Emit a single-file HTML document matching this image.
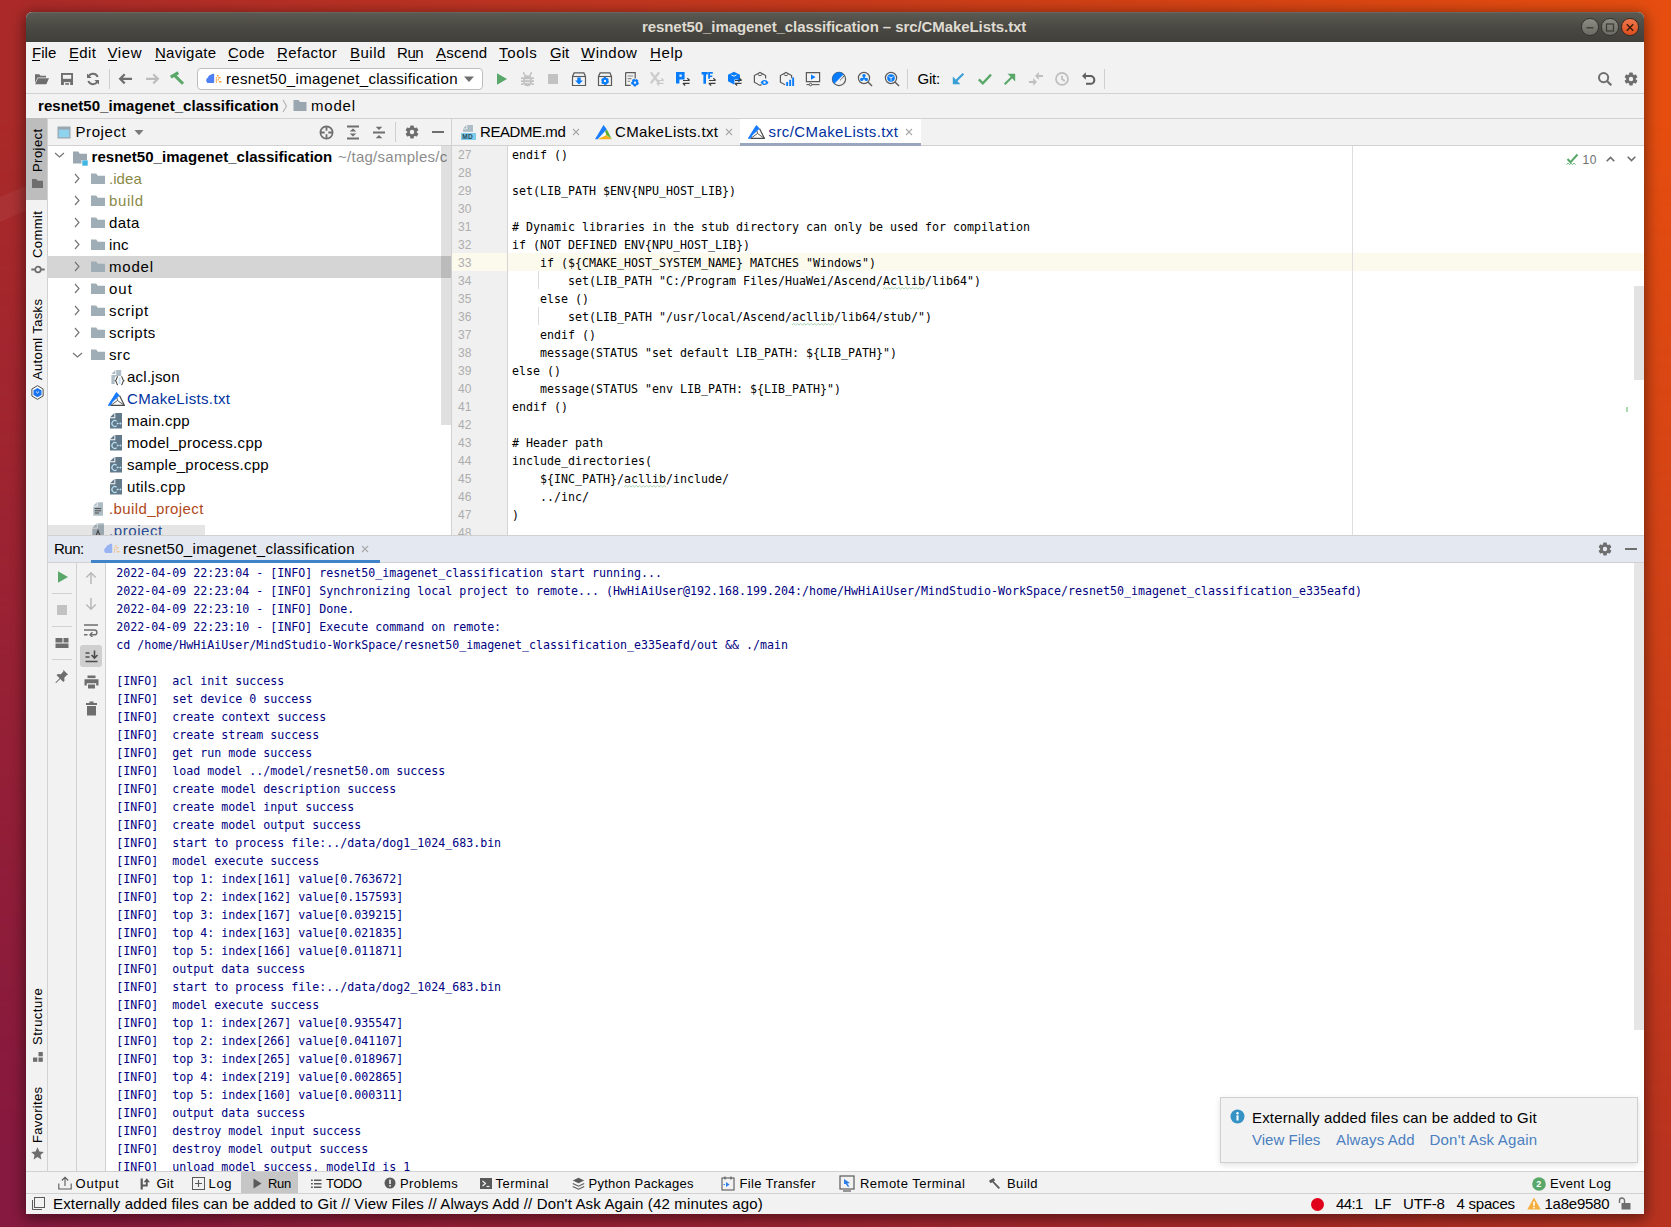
<!DOCTYPE html>
<html lang="en"><head><meta charset="utf-8"><title>resnet50_imagenet_classification – src/CMakeLists.txt</title>
<style>
html,body{margin:0;padding:0}
body{width:1671px;height:1227px;overflow:hidden;position:relative;font-family:"Liberation Sans", sans-serif;
background:#b8302a}
#root div,#root span,#root svg{position:absolute;box-sizing:border-box}
#root{position:absolute;left:0;top:0;width:1671px;height:1227px;overflow:hidden}
.t{font-family:"Liberation Sans", sans-serif;white-space:pre;line-height:20px;height:20px}
.m{font-family:"DejaVu Sans Mono", "Liberation Mono", monospace;white-space:pre;line-height:20px;height:20px;font-size:11.63px}
</style></head>
<body><div id="root">
<div style="left:0px;top:0px;width:1671px;height:1227px;background:linear-gradient(90deg,#aa2a29 0%,#b32e27 12%,#c2371f 40%,#d04016 65%,#df4911 88%,#e64e10 100%)"></div>
<div style="left:0px;top:0px;width:1671px;height:1227px;background:linear-gradient(90deg,#86193f 0%,#8f1c3a 15%,#9c2232 45%,#a92a27 75%,#b8331f 100%);-webkit-mask-image:linear-gradient(180deg,transparent 0%,transparent 10%,#000 94%);mask-image:linear-gradient(180deg,transparent 0%,transparent 10%,#000 94%)"></div>
<svg style="left:0px;top:150px;" width="40" height="100" viewBox="0 0 40 100"><path d="M0 47L40 30v24L0 72z" fill="rgba(255,255,255,.05)"/></svg>
<div style="left:26px;top:12px;width:1618px;height:1202px;background:#f2f2f2;border-radius:6px 6px 0 0;box-shadow:0 3px 14px 2px rgba(0,0,0,.45)"></div>
<div style="left:26px;top:12px;width:1618px;height:30px;background:linear-gradient(180deg,#5c5a53 0%,#4a4943 50%,#403f3a 100%);border-radius:6px 6px 0 0;box-shadow:inset 0 1px 0 rgba(255,255,255,.08)"></div>
<span class="t" style="left:642px;top:16.80px;font-size:15px;color:#dfdbd2;font-weight:bold;letter-spacing:-0.080px;">resnet50_imagenet_classification – src/CMakeLists.txt</span>
<div style="left:1581.2px;top:18.2px;width:17.6px;height:17.6px;background:linear-gradient(180deg,#8c8b84,#6b6a63);border:1px solid #34332f;border-radius:50%"></div>
<div style="left:1601.2px;top:18.2px;width:17.6px;height:17.6px;background:linear-gradient(180deg,#8c8b84,#6b6a63);border:1px solid #34332f;border-radius:50%"></div>
<div style="left:1621.2px;top:18.2px;width:17.6px;height:17.6px;background:linear-gradient(180deg,#f0784c,#dd4e1e);border:1px solid #3a2a22;border-radius:50%"></div>
<svg style="left:1582px;top:18.6px;" width="56" height="17" viewBox="0 0 56 17"><path d="M4.5 8.8h7" stroke="#3b3a35" stroke-width="1.3" fill="none"/><rect x="24.5" y="5" width="7" height="7" stroke="#3b3a35" stroke-width="1.2" fill="none"/><path d="M44.8 5.3l6.4 6.4M51.2 5.3l-6.4 6.4" stroke="#3a1a0c" stroke-width="1.4" fill="none"/></svg>
<span class="t" style="left:32px;top:42.80px;font-size:15px;letter-spacing:0.032px;">File</span>
<span class="t" style="left:69px;top:42.80px;font-size:15px;letter-spacing:0.360px;">Edit</span>
<span class="t" style="left:107.5px;top:42.80px;font-size:15px;letter-spacing:0.637px;">View</span>
<span class="t" style="left:155px;top:42.80px;font-size:15px;letter-spacing:0.260px;">Navigate</span>
<span class="t" style="left:228px;top:42.80px;font-size:15px;letter-spacing:0.235px;">Code</span>
<span class="t" style="left:277px;top:42.80px;font-size:15px;letter-spacing:0.450px;">Refactor</span>
<span class="t" style="left:350px;top:42.80px;font-size:15px;letter-spacing:0.488px;">Build</span>
<span class="t" style="left:397px;top:42.80px;font-size:15px;letter-spacing:-0.406px;">Run</span>
<span class="t" style="left:436px;top:42.80px;font-size:15px;letter-spacing:0.210px;">Ascend</span>
<span class="t" style="left:499px;top:42.80px;font-size:15px;letter-spacing:0.654px;">Tools</span>
<span class="t" style="left:550px;top:42.80px;font-size:15px;letter-spacing:0.042px;">Git</span>
<span class="t" style="left:581px;top:42.80px;font-size:15px;letter-spacing:0.491px;">Window</span>
<span class="t" style="left:650px;top:42.80px;font-size:15px;letter-spacing:0.610px;">Help</span>
<div style="left:32px;top:59.5px;width:8px;height:1px;background:#000"></div>
<div style="left:69px;top:59.5px;width:9px;height:1px;background:#000"></div>
<div style="left:107.5px;top:59.5px;width:9px;height:1px;background:#000"></div>
<div style="left:155px;top:59.5px;width:11px;height:1px;background:#000"></div>
<div style="left:228px;top:59.5px;width:10px;height:1px;background:#000"></div>
<div style="left:277px;top:59.5px;width:10px;height:1px;background:#000"></div>
<div style="left:350px;top:59.5px;width:10px;height:1px;background:#000"></div>
<div style="left:409px;top:59.5px;width:8px;height:1px;background:#000"></div>
<div style="left:436px;top:59.5px;width:10px;height:1px;background:#000"></div>
<div style="left:499px;top:59.5px;width:9px;height:1px;background:#000"></div>
<div style="left:550px;top:59.5px;width:10px;height:1px;background:#000"></div>
<div style="left:581px;top:59.5px;width:13px;height:1px;background:#000"></div>
<div style="left:650px;top:59.5px;width:11px;height:1px;background:#000"></div>
<div style="left:26px;top:93px;width:1618px;height:1px;background:#d1d1d1"></div>
<div style="left:197px;top:68px;width:286px;height:22px;background:#fff;border:1px solid #bebebe;border-radius:4px"></div>
<span class="t" style="left:226px;top:68.80px;font-size:15px;letter-spacing:0.312px;">resnet50_imagenet_classification</span>
<svg style="left:463px;top:75px;" width="12" height="8" viewBox="0 0 12 8"><path d="M1 1.5h10L6 7z" fill="#6e6e6e"/></svg>
<svg style="left:34px;top:72px;" width="16" height="14" viewBox="0 0 16 14"><path d="M1 2.2h4.2l1.4 1.6H12v1.6H3.6L1 11z" fill="#6e6e6e"/><path d="M3.9 6.2H15l-2.7 6H1.2z" fill="#6e6e6e"/></svg>
<svg style="left:60px;top:72px;" width="14" height="14" viewBox="0 0 14 14"><path d="M1 1h12v12H1z" fill="#6e6e6e"/><path d="M2.900 2.900h8.300v3.900H2.900z" fill="#f2f2f2"/><path d="M3.900 10.100h6.300V13H3.900z" fill="#f2f2f2"/><path d="M5.200 11.100H9v1.600H5.200z" fill="#6e6e6e"/></svg>
<svg style="left:86px;top:72px;" width="14" height="14" viewBox="0 0 14 14"><path d="M11.7 5A5 5 0 0 0 2.6 4.6M2.300 9a5 5 0 0 0 9.100.400" stroke="#6e6e6e" stroke-width="2" fill="none"/><path d="M1 1.500v4.600h4.600zM13 12.500V7.900H8.400z" fill="#6e6e6e"/></svg>
<div style="left:109px;top:69px;width:1px;height:20px;background:#cfcfcf"></div>
<svg style="left:118px;top:72px;" width="15" height="14" viewBox="0 0 15 14"><path d="M14 6.850H2.400M6.700 2.300L2.100 6.850l4.600 4.550" stroke="#6e6e6e" stroke-width="2.200" fill="none"/></svg>
<svg style="left:145px;top:72px;" width="15" height="14" viewBox="0 0 15 14"><path d="M1 6.850h11.600M8.300 2.300l4.600 4.550-4.600 4.550" stroke="#bdbdbd" stroke-width="2.200" fill="none"/></svg>
<svg style="left:169px;top:71px;" width="17" height="16" viewBox="0 0 17 16"><path d="M1.800 6.200L9.300 1.700" stroke="#59a869" stroke-width="3.300" fill="none"/><path d="M5.800 4.600l8.200 8.200" stroke="#59a869" stroke-width="3" fill="none"/></svg>
<svg style="left:205px;top:72px;" width="18" height="14" viewBox="0 0 18 14"><path d="M1.400 9.500c-.6-2 .3-3.600 1.700-4.100C3.400 3.600 4.800 2.600 6 2.700 6.800 1.800 8 1.400 9.200 2v8.200c0 .5-.3.800-.8.800H3.200c-.9 0-1.500-.6-1.800-1.500z" fill="#4f7ff5"/><path d="M12 3.800h1.600M10.800 5.900h1.300M13.300 5.800h2.200M10.800 8h1.300M12.800 7.900h1.200M10.800 10h1.300M14 9.800h2.500" stroke="#f7a035" stroke-width="1.400" fill="none"/></svg>
<svg style="left:496px;top:72px;" width="12" height="14" viewBox="0 0 12 14"><path d="M1 1.2L11 7 1 12.8z" fill="#59a869"/></svg>
<svg style="left:520px;top:70.5px;" width="15" height="16" viewBox="0 0 15 16"><g fill="#c2c2c2"><rect x="3" y="4.300" width="9" height="11" rx="4.200"/><path d="M1 7.200h2.500M11.500 7.200h2.500M1 10.200h2.500M11.500 10.200h2.500M1 13.200h2.500M11.500 13.200h2.500" stroke="#c2c2c2" stroke-width="1.700"/><path d="M5.200 4.800L3.300 1.200M9.800 4.800l1.900-3.600" stroke="#c2c2c2" stroke-width="1.500"/></g><path d="M5 8.700h5M5 11.700h5" stroke="#f2f2f2" stroke-width=".9"/></svg>
<div style="left:548px;top:74px;width:10px;height:10px;background:#c2c2c2"></div>
<svg style="left:571px;top:71px;" width="16" height="16" viewBox="0 0 16 16"><path d="M1.5 14.5v-9l1.6-3.6h9.8l1.6 3.6v9z" stroke="#5a5a5a" stroke-width="1.2" fill="none"/><path d="M1.5 5.5h13" stroke="#5a5a5a" stroke-width="1.1"/><path d="M6.3 6.6h3.4v2.9h2.2L8 13.5 4.100 9.500h2.200z" fill="#087cfa"/></svg>
<svg style="left:597px;top:71px;" width="16" height="16" viewBox="0 0 16 16"><path d="M1.5 14.5v-9l1.6-3.6h9.8l1.6 3.6v9z" stroke="#5a5a5a" stroke-width="1.2" fill="none"/><path d="M1.5 5.5h13" stroke="#5a5a5a" stroke-width="1.1"/><circle cx="8" cy="10" r="2.6" fill="none" stroke="#087cfa" stroke-width="2.6" stroke-dasharray="1.9 .82"/><circle cx="8" cy="10" r="2.2" fill="none" stroke="#087cfa" stroke-width="2"/></svg>
<svg style="left:624px;top:71px;" width="16" height="16" viewBox="0 0 16 16"><path d="M1.6 1.6h9.6v6M1.6 1.6v12.8h5" stroke="#5a5a5a" stroke-width="1.2" fill="none"/><path d="M3.6 5h5.6M3.6 7.6h4M3.6 10.2h2.6" stroke="#8a8a8a" stroke-width="1.1"/><circle cx="11" cy="11.6" r="2.6" fill="none" stroke="#087cfa" stroke-width="2.6" stroke-dasharray="2 1.2"/><circle cx="11" cy="11.6" r="2.2" fill="none" stroke="#087cfa" stroke-width="1.8"/></svg>
<svg style="left:649px;top:71px;" width="16" height="16" viewBox="0 0 16 16"><path d="M1.8 1.2l8.400 11M10.200 1.200l-8.400 11" stroke="#cdcdcd" stroke-width="2.300" fill="none"/><path d="M8 9.5h6.5M12.3 7.3l2.4 2.2M14.5 12.3H8M10.2 14.5l-2.4-2.2" stroke="#c9c9c9" stroke-width="1.2" fill="none"/></svg>
<svg style="left:675px;top:71px;" width="16" height="16" viewBox="0 0 16 16"><path d="M1 1h8.6v7.4H4.4v4.2H1z" fill="#087cfa"/><path d="M4.4 3.6h2.4v2.2H4.4z" fill="#f2f2f2"/><path d="M8 9.5h6.5M12.3 7.3l2.4 2.2M14.5 12.3H8M10.2 14.5l-2.4-2.2" stroke="#3c3c3c" stroke-width="1.2" fill="none"/></svg>
<svg style="left:701px;top:71px;" width="16" height="16" viewBox="0 0 16 16"><path d="M.6 1h6.2v2.4H5v9.4H2.4V3.4H.6z" fill="#087cfa"/><path d="M7.2 1h4.6v1.8H9v1.6h2.3v1.6H9v1.8H7.2z" fill="#087cfa"/><path d="M8 9.5h6.5M12.3 7.3l2.4 2.2M14.5 12.3H8M10.2 14.5l-2.4-2.2" stroke="#3c3c3c" stroke-width="1.2" fill="none"/></svg>
<svg style="left:727px;top:71px;" width="16" height="16" viewBox="0 0 16 16"><path d="M7 .8l6 3v6.5l-2 1V8.6H7.4v4.6L7 13.4 1 10.3V3.8z" fill="#087cfa"/><path d="M4.5 4l2.5 1.2L9.5 4" stroke="#f2f2f2" stroke-width="1" fill="none"/><path d="M8 9.5h6.5M12.3 7.3l2.4 2.2M14.5 12.3H8M10.2 14.5l-2.4-2.2" stroke="#3c3c3c" stroke-width="1.2" fill="none"/></svg>
<svg style="left:753px;top:71px;" width="16" height="16" viewBox="0 0 16 16"><path d="M8.5 13.6L7 14.4 1.4 11.2V4.6L7 1.4l5.6 3.2v3" stroke="#5a5a5a" stroke-width="1.2" fill="none"/><path d="M4.8 3.6L7 4.8l2.2-1.2" stroke="#5a5a5a" stroke-width="1" fill="none"/><path d="M7.6 11.6c1.2-1.9 2.4-2.6 3.9-2.6s2.8.7 4 2.6c-1.2 1.8-2.5 2.5-4 2.5s-2.7-.7-3.9-2.5z" fill="#087cfa"/><circle cx="11.5" cy="11.5" r="1.2" fill="#f2f2f2"/></svg>
<svg style="left:779px;top:71px;" width="16" height="16" viewBox="0 0 16 16"><path d="M6 13.8L1.4 11.2V4.6L7 1.4l5.6 3.2v2.6" stroke="#5a5a5a" stroke-width="1.2" fill="none"/><path d="M4.8 3.6L7 4.8l2.2-1.2" stroke="#5a5a5a" stroke-width="1" fill="none"/><path d="M7.2 11h1.9v4H7.2zM10.2 8.8h1.9V15h-1.9zM13.2 6.6h1.9V15h-1.9z" fill="#087cfa"/></svg>
<svg style="left:805px;top:71px;" width="16" height="16" viewBox="0 0 16 16"><path d="M1.4 1.6h13.2v9H1.4z" stroke="#5a5a5a" stroke-width="1.2" fill="none"/><path d="M6 3.4l4.6 2.7L6 8.8z" fill="#087cfa"/><path d="M1.5 13.6h13" stroke="#5a5a5a" stroke-width="1.1"/><circle cx="5.6" cy="13.6" r="1.3" fill="#f2f2f2" stroke="#5a5a5a" stroke-width="1"/></svg>
<svg style="left:831px;top:71px;" width="16" height="16" viewBox="0 0 16 16"><circle cx="8" cy="8" r="6.6" fill="none" stroke="#5a5a5a" stroke-width="1.2"/><path d="M8 8L12.7 3.3A6.6 6.6 0 0 0 1.4 8 6.6 6.6 0 0 0 3.3 12.7z" fill="#087cfa"/><path d="M8 8L12.7 3.3" stroke="#f2f2f2" stroke-width="0"/><path d="M9.2 9.2c1-.9 2.8-2.7 3.6-4.2" stroke="#5a5a5a" stroke-width="1" fill="none"/></svg>
<svg style="left:857px;top:71px;" width="16" height="16" viewBox="0 0 16 16"><circle cx="7" cy="7" r="5.6" fill="none" stroke="#5a5a5a" stroke-width="1.2"/><path d="M11 11l4 4" stroke="#5a5a5a" stroke-width="1.5"/><circle cx="7" cy="4.6" r="1.7" fill="#087cfa"/><circle cx="4.7" cy="8.4" r="1.7" fill="#087cfa"/><circle cx="9.3" cy="8.4" r="1.7" fill="#087cfa"/><circle cx="7" cy="7.2" r="1.2" fill="#087cfa"/></svg>
<svg style="left:884px;top:71px;" width="16" height="16" viewBox="0 0 16 16"><circle cx="7" cy="7" r="5.6" fill="none" stroke="#5a5a5a" stroke-width="1.2"/><path d="M11 11l4 4" stroke="#5a5a5a" stroke-width="1.5"/><circle cx="7" cy="7" r="3.8" fill="#087cfa"/><path d="M4.6 5.6l2.4 1.2 2.4-1.2M7 6.8v3" stroke="#f2f2f2" stroke-width=".9" fill="none"/></svg>
<div style="left:907px;top:69px;width:1px;height:20px;background:#cfcfcf"></div>
<span class="t" style="left:917.5px;top:68.80px;font-size:15px;letter-spacing:-0.261px;">Git:</span>
<svg style="left:951px;top:72px;" width="14" height="14" viewBox="0 0 14 14"><path d="M12.300 1.700L5 9" stroke="#389fd6" stroke-width="2.100" fill="none"/><path d="M1.800 12.200V4.600l7.600 7.600z" fill="#389fd6"/></svg>
<svg style="left:977px;top:72px;" width="16" height="14" viewBox="0 0 16 14"><path d="M1.800 7.400l4 3.900L14 2.600" stroke="#59a869" stroke-width="2.300" fill="none"/></svg>
<svg style="left:1003px;top:72px;" width="14" height="14" viewBox="0 0 14 14"><path d="M1.700 12.300L9 5" stroke="#59a869" stroke-width="2.100" fill="none"/><path d="M12.200 1.800v7.600L4.600 1.800z" fill="#59a869"/></svg>
<svg style="left:1029px;top:71px;" width="15" height="16" viewBox="0 0 15 16"><g fill="#bebebe"><path d="M6.100 4.900L9.800 1v7.800z"/><path d="M7.900 11L4.200 7v7.800z"/></g><path d="M9.600 4.900H14M0 11h4.400" stroke="#bebebe" stroke-width="2" fill="none"/></svg>
<svg style="left:1054px;top:71px;" width="16" height="16" viewBox="0 0 16 16"><circle cx="8" cy="7.900" r="6" fill="none" stroke="#bebebe" stroke-width="1.700"/><path d="M8 4.800V8l2.700 2" stroke="#bebebe" stroke-width="1.700" fill="none"/></svg>
<svg style="left:1082px;top:71px;" width="14" height="16" viewBox="0 0 14 16"><path d="M3.600 5H8.400a3.900 3.900 0 0 1 0 7.800H4" stroke="#5e5e5e" stroke-width="2.100" fill="none"/><path d="M0 5l3.900-3.800v7.600z" fill="#5e5e5e"/></svg>
<div style="left:1104px;top:69px;width:1px;height:20px;background:#cfcfcf"></div>
<svg style="left:1597px;top:71px;" width="16" height="16" viewBox="0 0 16 16"><circle cx="6.600" cy="6.600" r="4.600" fill="none" stroke="#6e6e6e" stroke-width="2"/><path d="M10 10l4.300 4.300" stroke="#6e6e6e" stroke-width="2.300"/></svg>
<svg style="left:1624px;top:72px;" width="14" height="14" viewBox="0 0 14 14"><g fill="#6e6e6e"><rect x="5.2" y="0.5" width="3.6" height="13" rx=".7" transform="rotate(0 7 7)"/><rect x="5.2" y="0.5" width="3.6" height="13" rx=".7" transform="rotate(60 7 7)"/><rect x="5.2" y="0.5" width="3.6" height="13" rx=".7" transform="rotate(120 7 7)"/><circle cx="7" cy="7" r="4.9"/></g><circle cx="7" cy="7" r="2.200" fill="#f2f2f2"/></svg>
<div style="left:26px;top:118px;width:1618px;height:1px;background:#d1d1d1"></div>
<span class="t" style="left:38px;top:95.80px;font-size:15px;font-weight:bold;letter-spacing:0.047px;">resnet50_imagenet_classification</span>
<svg style="left:282px;top:99px;" width="6" height="14" viewBox="0 0 6 14"><path d="M1 1l3.500 6L1 13" stroke="#b0b0b0" stroke-width="1.100" fill="none"/></svg>
<svg style="left:293px;top:99px;" width="14" height="13" viewBox="0 0 14 13"><path d="M0.500 1h5l1.500 2h6.500v9H0.500z" fill="#9aa7b0"/></svg>
<span class="t" style="left:311px;top:95.80px;font-size:15px;letter-spacing:0.788px;">model</span>
<div style="left:47px;top:119px;width:1px;height:1052px;background:#d1d1d1"></div>
<div style="left:26px;top:118px;width:21px;height:82px;background:#bdbdbd"></div>
<div style="left:38.4px;top:172.3px;width:0;height:0;transform:rotate(-90deg)"><span class="t" style="left:0;top:-10px;font-size:13px;color:#000;letter-spacing:0.447px;">Project</span></div>
<svg style="left:32px;top:179px;" width="11" height="9" viewBox="0 0 11 9"><path d="M0 0h4.300l1.300 1.800H11V9H0z" fill="#6e6e6e"/></svg>
<div style="left:38.4px;top:258.3px;width:0;height:0;transform:rotate(-90deg)"><span class="t" style="left:0;top:-10px;font-size:13px;color:#000;letter-spacing:0.421px;">Commit</span></div>
<svg style="left:30.5px;top:264.5px;" width="14" height="9" viewBox="0 0 14 9"><circle cx="7" cy="4.500" r="2.800" fill="none" stroke="#6e6e6e" stroke-width="1.800"/><path d="M0.300 4.500h3.500M10.200 4.500h3.500" stroke="#6e6e6e" stroke-width="1.800"/></svg>
<div style="left:38.4px;top:380px;width:0;height:0;transform:rotate(-90deg)"><span class="t" style="left:0;top:-10px;font-size:13px;color:#000;letter-spacing:0.352px;">Automl Tasks</span></div>
<svg style="left:30.5px;top:384.5px;" width="13" height="15" viewBox="0 0 13 15"><path d="M6.500 0.700l5.600 3.300v7L6.500 14.300 0.900 11V4z" fill="#fff" stroke="#3a3a3a" stroke-width=".9"/><path d="M6.500 3l4 2.300v4.600L6.500 12.200l-4-2.300V5.300z" fill="#1a73f0"/><path d="M5 6.600l1.500 1.300L8 6.600" stroke="#fff" stroke-width=".9" fill="none"/></svg>
<div style="left:38.4px;top:1045.3px;width:0;height:0;transform:rotate(-90deg)"><span class="t" style="left:0;top:-10px;font-size:13px;color:#000;letter-spacing:0.506px;">Structure</span></div>
<svg style="left:33px;top:1051.5px;" width="10" height="10" viewBox="0 0 10 10"><g fill="#6e6e6e"><rect x="5.500" y="0" width="4.300" height="4.300"/><rect x="0" y="5.500" width="4.300" height="4.300"/><rect x="5.500" y="5.500" width="4.300" height="4.300"/></g></svg>
<div style="left:38.4px;top:1142.6px;width:0;height:0;transform:rotate(-90deg)"><span class="t" style="left:0;top:-10px;font-size:13px;color:#000;letter-spacing:0.315px;">Favorites</span></div>
<svg style="left:31px;top:1147px;" width="13" height="13" viewBox="0 0 13 13"><path d="M6.500 0.300l1.900 4.200 4.400.500-3.300 3 .900 4.400-3.900-2.300-3.900 2.300.900-4.400-3.300-3 4.400-.500z" fill="#6e6e6e"/></svg>
<div style="left:48px;top:145px;width:403px;height:1px;background:#d1d1d1"></div>
<div style="left:451px;top:119px;width:1px;height:416px;background:#d1d1d1"></div>
<svg style="left:57px;top:126px;" width="14" height="13" viewBox="0 0 14 13"><rect x="0.500" y="0.500" width="13" height="12" fill="#9aa7b0"/><rect x="1.800" y="3.600" width="10.400" height="7.600" fill="#8fd3ee"/></svg>
<span class="t" style="left:75.5px;top:121.80px;font-size:15px;letter-spacing:0.587px;">Project</span>
<svg style="left:134px;top:129px;" width="10" height="7" viewBox="0 0 10 7"><path d="M0.500 1h9L5 6.300z" fill="#7a7a7a"/></svg>
<svg style="left:319px;top:124.8px;" width="15" height="15" viewBox="0 0 15 15"><circle cx="7.500" cy="7.500" r="6.100" fill="none" stroke="#6e6e6e" stroke-width="1.700"/><path d="M7.500 1.500v4.200M7.500 9.300v4.200M1.500 7.500h4.200M9.300 7.500h4.200" stroke="#6e6e6e" stroke-width="1.800"/></svg>
<svg style="left:346px;top:124.5px;" width="14" height="15" viewBox="0 0 14 15"><path d="M1 1.600h12M1 13.400h12" stroke="#6e6e6e" stroke-width="2"/><path d="M7 3.600l3.300 2.900H3.700zM7 11.400l3.300-2.900H3.700z" fill="#6e6e6e"/></svg>
<svg style="left:372px;top:124.5px;" width="14" height="15" viewBox="0 0 14 15"><path d="M1 7.500h12" stroke="#6e6e6e" stroke-width="2"/><path d="M7 5l3.300-3.200H3.700zM7 10l3.300 3.200H3.700z" fill="#6e6e6e"/></svg>
<div style="left:395px;top:122px;width:1px;height:20px;background:#cfcfcf"></div>
<svg style="left:405px;top:124.8px;" width="14" height="14" viewBox="0 0 14 14"><g fill="#6e6e6e"><rect x="5.2" y="0.5" width="3.6" height="13" rx=".7" transform="rotate(0 7 7)"/><rect x="5.2" y="0.5" width="3.6" height="13" rx=".7" transform="rotate(60 7 7)"/><rect x="5.2" y="0.5" width="3.6" height="13" rx=".7" transform="rotate(120 7 7)"/><circle cx="7" cy="7" r="4.9"/></g><circle cx="7" cy="7" r="2.200" fill="#f2f2f2"/></svg>
<div style="left:432px;top:130.8px;width:12px;height:2px;background:#6e6e6e"></div>
<div style="left:48px;top:146px;width:403px;height:389px;background:#fff"></div>
<div style="left:48px;top:256px;width:403px;height:22px;background:#d5d5d5"></div>
<svg style="left:54px;top:152px;" width="11" height="7" viewBox="0 0 11 7"><path d="M1 1l4.500 4L10 1" stroke="#737373" stroke-width="1.150" fill="none"/></svg>
<svg style="left:73px;top:151px;" width="16" height="15" viewBox="0 0 16 15"><path d="M0 0.500h5.200l1.600 2.200H14V9H8.500v3.500H0z" fill="#9aa7b0"/><rect x="9.300" y="9.300" width="5.400" height="5.400" fill="#40b6e0"/></svg>
<span class="t" style="left:91.5px;top:146.80px;font-size:15px;font-weight:bold;letter-spacing:0.047px;">resnet50_imagenet_classification</span>
<span class="t" style="left:338px;top:146.80px;font-size:15px;color:#8c8c8c;letter-spacing:0.267px;width:113px;overflow:hidden;">~/tag/samples/c</span>
<svg style="left:74px;top:173px;" width="7" height="11" viewBox="0 0 7 11"><path d="M1 1l4 4.500L1 10" stroke="#737373" stroke-width="1.150" fill="none"/></svg>
<svg style="left:91px;top:173px;" width="14" height="13" viewBox="0 0 14 13"><path d="M0 0.500h5.200l1.600 2.200H14V11H0z" fill="#9fadb6"/></svg>
<span class="t" style="left:109px;top:168.80px;font-size:15px;color:#8a8a47;letter-spacing:0.054px;">.idea</span>
<svg style="left:74px;top:195px;" width="7" height="11" viewBox="0 0 7 11"><path d="M1 1l4 4.500L1 10" stroke="#737373" stroke-width="1.150" fill="none"/></svg>
<svg style="left:91px;top:195px;" width="14" height="13" viewBox="0 0 14 13"><path d="M0 0.500h5.200l1.600 2.200H14V11H0z" fill="#9fadb6"/></svg>
<span class="t" style="left:109px;top:190.80px;font-size:15px;color:#8a8a47;letter-spacing:0.619px;">build</span>
<svg style="left:74px;top:217px;" width="7" height="11" viewBox="0 0 7 11"><path d="M1 1l4 4.500L1 10" stroke="#737373" stroke-width="1.150" fill="none"/></svg>
<svg style="left:91px;top:217px;" width="14" height="13" viewBox="0 0 14 13"><path d="M0 0.500h5.200l1.600 2.200H14V11H0z" fill="#9fadb6"/></svg>
<span class="t" style="left:109px;top:212.80px;font-size:15px;letter-spacing:0.399px;">data</span>
<svg style="left:74px;top:239px;" width="7" height="11" viewBox="0 0 7 11"><path d="M1 1l4 4.500L1 10" stroke="#737373" stroke-width="1.150" fill="none"/></svg>
<svg style="left:91px;top:239px;" width="14" height="13" viewBox="0 0 14 13"><path d="M0 0.500h5.200l1.600 2.200H14V11H0z" fill="#9fadb6"/></svg>
<span class="t" style="left:109px;top:234.80px;font-size:15px;letter-spacing:0.208px;">inc</span>
<svg style="left:74px;top:261px;" width="7" height="11" viewBox="0 0 7 11"><path d="M1 1l4 4.500L1 10" stroke="#737373" stroke-width="1.150" fill="none"/></svg>
<svg style="left:91px;top:261px;" width="14" height="13" viewBox="0 0 14 13"><path d="M0 0.500h5.200l1.600 2.200H14V11H0z" fill="#9fadb6"/></svg>
<span class="t" style="left:109px;top:256.80px;font-size:15px;letter-spacing:0.788px;">model</span>
<svg style="left:74px;top:283px;" width="7" height="11" viewBox="0 0 7 11"><path d="M1 1l4 4.500L1 10" stroke="#737373" stroke-width="1.150" fill="none"/></svg>
<svg style="left:91px;top:283px;" width="14" height="13" viewBox="0 0 14 13"><path d="M0 0.500h5.200l1.600 2.200H14V11H0z" fill="#9fadb6"/></svg>
<span class="t" style="left:109px;top:278.80px;font-size:15px;letter-spacing:0.979px;">out</span>
<svg style="left:74px;top:305px;" width="7" height="11" viewBox="0 0 7 11"><path d="M1 1l4 4.500L1 10" stroke="#737373" stroke-width="1.150" fill="none"/></svg>
<svg style="left:91px;top:305px;" width="14" height="13" viewBox="0 0 14 13"><path d="M0 0.500h5.200l1.600 2.200H14V11H0z" fill="#9fadb6"/></svg>
<span class="t" style="left:109px;top:300.80px;font-size:15px;letter-spacing:0.660px;">script</span>
<svg style="left:74px;top:327px;" width="7" height="11" viewBox="0 0 7 11"><path d="M1 1l4 4.500L1 10" stroke="#737373" stroke-width="1.150" fill="none"/></svg>
<svg style="left:91px;top:327px;" width="14" height="13" viewBox="0 0 14 13"><path d="M0 0.500h5.200l1.600 2.200H14V11H0z" fill="#9fadb6"/></svg>
<span class="t" style="left:109px;top:322.80px;font-size:15px;letter-spacing:0.494px;">scripts</span>
<svg style="left:72px;top:352px;" width="11" height="7" viewBox="0 0 11 7"><path d="M1 1l4.500 4L10 1" stroke="#737373" stroke-width="1.150" fill="none"/></svg>
<svg style="left:91px;top:349px;" width="14" height="13" viewBox="0 0 14 13"><path d="M0 0.500h5.200l1.600 2.200H14V11H0z" fill="#9fadb6"/></svg>
<span class="t" style="left:109px;top:344.80px;font-size:15px;letter-spacing:0.599px;">src</span>
<svg style="left:110.5px;top:370px;" width="14" height="16" viewBox="0 0 14 16"><path d="M0.400 4L4.400 0v4z" fill="#aebcc5"/><path d="M5.200 0h5v14H0.400V5h4.800z" fill="#aebcc5"/><rect x="3.600" y="6" width="10" height="9.600" rx="3" fill="#fff"/><rect x="7.600" y="7.500" width="2" height="6.500" fill="#c9e3f0"/><path d="M7 6.600c-1.700 0-.8 3.200-2.600 4.100 1.800.900.900 4.100 2.600 4.100M10.200 6.600c1.700 0 .8 3.200 2.600 4.100-1.800.900-.900 4.100-2.600 4.100" stroke="#4d4d4d" stroke-width="1.100" fill="none"/></svg>
<span class="t" style="left:127px;top:366.80px;font-size:15px;letter-spacing:0.241px;">acl.json</span>
<svg style="left:107.5px;top:392px;" width="17" height="15" viewBox="0 0 17 15"><path d="M8.400 0L11.800 3.400 0.500 13.800 0 13.300z" fill="#1a7cff"/><path d="M8.400 0L0 13.800h3z" fill="#1a7cff"/><path d="M11.600 3.800l4.700 9.500H2.800" stroke="#4a4a4a" stroke-width="1.200" fill="none"/><path d="M3.500 12.800l6-4.300 6 4.300M9.500 8.500l-.5-2.500" stroke="#4a4a4a" stroke-width=".9" fill="none"/></svg>
<span class="t" style="left:127px;top:388.80px;font-size:15px;color:#0032a0;letter-spacing:0.352px;">CMakeLists.txt</span>
<svg style="left:110px;top:413px;" width="12" height="16" viewBox="0 0 12 16"><path d="M0 4.300L4.400 0v4.300z" fill="#62798a"/><path d="M5.300 0H12v15.500H0V5.200h5.300z" fill="#62798a"/><path d="M6.600 8.200a2.900 2.900 0 1 0 0 4.600" stroke="#b9e0f2" stroke-width="1.200" fill="none"/><path d="M6.600 10.500h2.200M7.700 9.400v2.200M9.300 10.500h2.200M10.400 9.400v2.200" stroke="#b9e0f2" stroke-width=".8"/></svg>
<span class="t" style="left:127px;top:410.80px;font-size:15px;letter-spacing:0.241px;">main.cpp</span>
<svg style="left:110px;top:435px;" width="12" height="16" viewBox="0 0 12 16"><path d="M0 4.300L4.400 0v4.300z" fill="#62798a"/><path d="M5.300 0H12v15.500H0V5.200h5.300z" fill="#62798a"/><path d="M6.600 8.200a2.900 2.900 0 1 0 0 4.600" stroke="#b9e0f2" stroke-width="1.200" fill="none"/><path d="M6.600 10.500h2.200M7.700 9.400v2.200M9.300 10.500h2.200M10.400 9.400v2.200" stroke="#b9e0f2" stroke-width=".8"/></svg>
<span class="t" style="left:127px;top:432.80px;font-size:15px;letter-spacing:0.336px;">model_process.cpp</span>
<svg style="left:110px;top:457px;" width="12" height="16" viewBox="0 0 12 16"><path d="M0 4.300L4.400 0v4.300z" fill="#62798a"/><path d="M5.300 0H12v15.500H0V5.200h5.300z" fill="#62798a"/><path d="M6.600 8.200a2.900 2.900 0 1 0 0 4.600" stroke="#b9e0f2" stroke-width="1.200" fill="none"/><path d="M6.600 10.500h2.200M7.700 9.400v2.200M9.300 10.500h2.200M10.400 9.400v2.200" stroke="#b9e0f2" stroke-width=".8"/></svg>
<span class="t" style="left:127px;top:454.80px;font-size:15px;letter-spacing:0.234px;">sample_process.cpp</span>
<svg style="left:110px;top:479px;" width="12" height="16" viewBox="0 0 12 16"><path d="M0 4.300L4.400 0v4.300z" fill="#62798a"/><path d="M5.300 0H12v15.500H0V5.200h5.300z" fill="#62798a"/><path d="M6.600 8.200a2.900 2.900 0 1 0 0 4.600" stroke="#b9e0f2" stroke-width="1.200" fill="none"/><path d="M6.600 10.500h2.200M7.700 9.400v2.200M9.300 10.500h2.200M10.400 9.400v2.200" stroke="#b9e0f2" stroke-width=".8"/></svg>
<span class="t" style="left:127px;top:476.80px;font-size:15px;letter-spacing:0.418px;">utils.cpp</span>
<svg style="left:93px;top:502px;" width="10" height="14" viewBox="0 0 10 14"><path d="M0.300 3.800L3.800 0.300v3.500z" fill="#aebcc5"/><path d="M4.600 0.300H10v13.400H0.300V4.600h4.300z" fill="#aebcc5"/><path d="M1.800 6.600h6.400M1.800 8.800h6.400M1.800 11h4.200" stroke="#4d4d4d" stroke-width="1"/></svg>
<span class="t" style="left:109px;top:498.80px;font-size:15px;color:#b0491c;letter-spacing:0.398px;">.build_project</span>
<svg style="left:92px;top:523px;" width="12" height="12" viewBox="0 0 12 12"><path d="M0.300 4.800L4.800 0.300v4.500z" fill="#aebcc5"/><path d="M5.600 0.300H12v13.400H0.300V5.600h5.300z" fill="#aebcc5"/><path d="M3.600 14l2.400-6.500L8.400 14" stroke="#4d4d4d" stroke-width="1.200" fill="none"/></svg>
<span class="t" style="left:109px;top:520.80px;font-size:15px;color:#2f56a6;letter-spacing:0.575px;height:15px;overflow:hidden;">.project</span>
<div style="left:441px;top:146px;width:10px;height:278.5px;background:rgba(0,0,0,.12)"></div>
<div style="left:48px;top:525px;width:157px;height:10px;background:rgba(0,0,0,.1)"></div>
<div style="left:452px;top:145px;width:1192px;height:1px;background:#d1d1d1"></div>
<svg style="left:461px;top:125px;" width="15" height="15" viewBox="0 0 15 15"><path d="M2 3.400L5.400 0v3.400z" fill="#aebcc5"/><path d="M6.200 0H12v6.800H2V4.200h4.200z" fill="#aebcc5"/><rect x="0" y="8" width="15" height="7" fill="#7fcbea"/></svg>
<span class="t" style="left:462.2px;top:132.6px;font-size:6.5px;font-weight:bold;color:#23485a;line-height:8px;height:8px;letter-spacing:.3px">MD</span>
<span class="t" style="left:480px;top:121.80px;font-size:15px;letter-spacing:-0.432px;">README.md</span>
<svg style="left:572px;top:128px;" width="8" height="8" viewBox="0 0 8 8"><path d="M1 1l6 6M7 1L1 7" stroke="#a8a8a8" stroke-width="1.100" fill="none"/></svg>
<svg style="left:594.5px;top:124.5px;" width="17" height="15" viewBox="0 0 17 15"><path d="M8.500 0L0 14.200h2.600L11.800 4.200z" fill="#1a7cff"/><path d="M11.900 4.400L16.700 14 11 9.800 10 6.200z" fill="#5fb030"/><path d="M2.800 14.200L11 10l5.700 4.200z" fill="#f5b21a"/><path d="M10 6.500l1 3.500-4.800 2.500z" fill="#fff"/></svg>
<span class="t" style="left:615px;top:121.80px;font-size:15px;letter-spacing:0.352px;">CMakeLists.txt</span>
<svg style="left:725px;top:128px;" width="8" height="8" viewBox="0 0 8 8"><path d="M1 1l6 6M7 1L1 7" stroke="#a8a8a8" stroke-width="1.100" fill="none"/></svg>
<div style="left:740px;top:119px;width:181px;height:26px;background:#fff"></div>
<div style="left:740px;top:143px;width:181px;height:3px;background:#9aa5be"></div>
<svg style="left:747.5px;top:124.5px;" width="17" height="15" viewBox="0 0 17 15"><path d="M8.400 0L11.800 3.400 0.500 13.800 0 13.300z" fill="#1a7cff"/><path d="M8.400 0L0 13.800h3z" fill="#1a7cff"/><path d="M11.600 3.800l4.700 9.500H2.800" stroke="#4a4a4a" stroke-width="1.200" fill="none"/><path d="M3.500 12.800l6-4.300 6 4.300M9.500 8.500l-.5-2.500" stroke="#4a4a4a" stroke-width=".9" fill="none"/></svg>
<span class="t" style="left:768.5px;top:121.80px;font-size:15px;color:#0032a0;letter-spacing:0.404px;">src/CMakeLists.txt</span>
<svg style="left:905px;top:128px;" width="8" height="8" viewBox="0 0 8 8"><path d="M1 1l6 6M7 1L1 7" stroke="#a8a8a8" stroke-width="1.100" fill="none"/></svg>
<div style="left:452px;top:146px;width:1192px;height:389px;background:#fff"></div>
<div style="left:452px;top:146px;width:55px;height:389px;background:#f0f0f0"></div>
<div style="left:507px;top:146px;width:1px;height:389px;background:#d4d4d4"></div>
<div style="left:452px;top:253px;width:55px;height:18px;background:#fcfaed"></div>
<div style="left:508px;top:253px;width:1136px;height:18px;background:#fcfaed"></div>
<div style="left:1352px;top:146px;width:1px;height:389px;background:#dedede"></div>
<span class="t" style="left:458px;top:144.84px;font-size:12px;color:#adadad;">27</span>
<span class="m" style="left:512px;top:144.97px;font-size:11.63px;">endif ()</span>
<span class="t" style="left:458px;top:162.84px;font-size:12px;color:#adadad;">28</span>
<span class="t" style="left:458px;top:180.84px;font-size:12px;color:#adadad;">29</span>
<span class="m" style="left:512px;top:180.97px;font-size:11.63px;">set(LIB_PATH $ENV{NPU_HOST_LIB})</span>
<span class="t" style="left:458px;top:198.84px;font-size:12px;color:#adadad;">30</span>
<span class="t" style="left:458px;top:216.84px;font-size:12px;color:#adadad;">31</span>
<span class="m" style="left:512px;top:216.97px;font-size:11.63px;"># Dynamic libraries in the stub directory can only be used for compilation</span>
<span class="t" style="left:458px;top:234.84px;font-size:12px;color:#adadad;">32</span>
<span class="m" style="left:512px;top:234.97px;font-size:11.63px;">if (NOT DEFINED ENV{NPU_HOST_LIB})</span>
<span class="t" style="left:458px;top:252.84px;font-size:12px;color:#adadad;">33</span>
<span class="m" style="left:512px;top:252.97px;font-size:11.63px;">    if (${CMAKE_HOST_SYSTEM_NAME} MATCHES "Windows")</span>
<span class="t" style="left:458px;top:270.84px;font-size:12px;color:#adadad;">34</span>
<span class="m" style="left:512px;top:270.97px;font-size:11.63px;">        set(LIB_PATH "C:/Program Files/HuaWei/Ascend/Acllib/lib64")</span>
<span class="t" style="left:458px;top:288.84px;font-size:12px;color:#adadad;">35</span>
<span class="m" style="left:512px;top:288.97px;font-size:11.63px;">    else ()</span>
<span class="t" style="left:458px;top:306.84px;font-size:12px;color:#adadad;">36</span>
<span class="m" style="left:512px;top:306.97px;font-size:11.63px;">        set(LIB_PATH "/usr/local/Ascend/acllib/lib64/stub/")</span>
<span class="t" style="left:458px;top:324.84px;font-size:12px;color:#adadad;">37</span>
<span class="m" style="left:512px;top:324.97px;font-size:11.63px;">    endif ()</span>
<span class="t" style="left:458px;top:342.84px;font-size:12px;color:#adadad;">38</span>
<span class="m" style="left:512px;top:342.97px;font-size:11.63px;">    message(STATUS "set default LIB_PATH: ${LIB_PATH}")</span>
<span class="t" style="left:458px;top:360.84px;font-size:12px;color:#adadad;">39</span>
<span class="m" style="left:512px;top:360.97px;font-size:11.63px;">else ()</span>
<span class="t" style="left:458px;top:378.84px;font-size:12px;color:#adadad;">40</span>
<span class="m" style="left:512px;top:378.97px;font-size:11.63px;">    message(STATUS "env LIB_PATH: ${LIB_PATH}")</span>
<span class="t" style="left:458px;top:396.84px;font-size:12px;color:#adadad;">41</span>
<span class="m" style="left:512px;top:396.97px;font-size:11.63px;">endif ()</span>
<span class="t" style="left:458px;top:414.84px;font-size:12px;color:#adadad;">42</span>
<span class="t" style="left:458px;top:432.84px;font-size:12px;color:#adadad;">43</span>
<span class="m" style="left:512px;top:432.97px;font-size:11.63px;"># Header path</span>
<span class="t" style="left:458px;top:450.84px;font-size:12px;color:#adadad;">44</span>
<span class="m" style="left:512px;top:450.97px;font-size:11.63px;">include_directories(</span>
<span class="t" style="left:458px;top:468.84px;font-size:12px;color:#adadad;">45</span>
<span class="m" style="left:512px;top:468.97px;font-size:11.63px;">    ${INC_PATH}/acllib/include/</span>
<span class="t" style="left:458px;top:486.84px;font-size:12px;color:#adadad;">46</span>
<span class="m" style="left:512px;top:486.97px;font-size:11.63px;">    ../inc/</span>
<span class="t" style="left:458px;top:504.84px;font-size:12px;color:#adadad;">47</span>
<span class="m" style="left:512px;top:504.97px;font-size:11.63px;">)</span>
<div style="left:452px;top:523px;width:60px;height:12px;overflow:hidden"><span class="t" style="left:6px;top:-0.5px;font-size:12px;color:#adadad">48</span></div>
<div style="left:538px;top:271px;width:1px;height:18px;background:#dcdcdc"></div>
<div style="left:538px;top:307px;width:1px;height:18px;background:#dcdcdc"></div>
<svg style="left:883px;top:287px;" width="42" height="3" viewBox="0 0 42 3"><path d="M0 2l1.750-1.500 1.750 1.500 1.750-1.500 1.750 1.500 1.750-1.500 1.750 1.500 1.750-1.500 1.750 1.500 1.750-1.500 1.750 1.500 1.750-1.500 1.750 1.500 1.750-1.500 1.750 1.500 1.750-1.500 1.750 1.500 1.750-1.500 1.750 1.500 1.750-1.500 1.750 1.500 1.750-1.500 1.750 1.500 1.750-1.500 1.750 1.500" stroke="#8fc79a" stroke-width=".8" fill="none"/></svg>
<svg style="left:792px;top:323px;" width="42" height="3" viewBox="0 0 42 3"><path d="M0 2l1.750-1.500 1.750 1.500 1.750-1.500 1.750 1.500 1.750-1.500 1.750 1.500 1.750-1.500 1.750 1.500 1.750-1.500 1.750 1.500 1.750-1.500 1.750 1.500 1.750-1.500 1.750 1.500 1.750-1.500 1.750 1.500 1.750-1.500 1.750 1.500 1.750-1.500 1.750 1.500 1.750-1.500 1.750 1.500 1.750-1.500 1.750 1.500" stroke="#8fc79a" stroke-width=".8" fill="none"/></svg>
<svg style="left:624px;top:485px;" width="42" height="3" viewBox="0 0 42 3"><path d="M0 2l1.750-1.500 1.750 1.500 1.750-1.500 1.750 1.500 1.750-1.500 1.750 1.500 1.750-1.500 1.750 1.500 1.750-1.500 1.750 1.500 1.750-1.500 1.750 1.500 1.750-1.500 1.750 1.500 1.750-1.500 1.750 1.500 1.750-1.500 1.750 1.500 1.750-1.500 1.750 1.500 1.750-1.500 1.750 1.500 1.750-1.500 1.750 1.500" stroke="#8fc79a" stroke-width=".8" fill="none"/></svg>
<svg style="left:1566px;top:153px;" width="13" height="13" viewBox="0 0 13 13"><path d="M1.500 6l3 3.200L11.500 1.500" stroke="#59a869" stroke-width="2" fill="none"/><path d="M0.500 11.500l1.500-1.300 1.500 1.300 1.500-1.300 1.500 1.300 1.500-1.300 1.500 1.300" stroke="#59a869" stroke-width=".9" fill="none"/></svg>
<span class="t" style="left:1582.5px;top:149.84px;font-size:12px;color:#6e6e6e;letter-spacing:0.474px;">10</span>
<svg style="left:1605px;top:155px;" width="11" height="8" viewBox="0 0 11 8"><path d="M1.700 6.300L5.500 2.500 9.300 6.300" stroke="#6e6e6e" stroke-width="1.600" fill="none"/></svg>
<svg style="left:1626px;top:155px;" width="11" height="8" viewBox="0 0 11 8"><path d="M1.700 1.700L5.500 5.500 9.300 1.700" stroke="#6e6e6e" stroke-width="1.600" fill="none"/></svg>
<div style="left:1634px;top:286px;width:10px;height:94px;background:#e3e3e3"></div>
<div style="left:1626px;top:407px;width:2px;height:5px;background:#a8dcae"></div>
<div style="left:48px;top:535px;width:1596px;height:1px;background:#d1d1d1"></div>
<div style="left:48px;top:536px;width:1596px;height:27px;background:#e4e8f0"></div>
<div style="left:48px;top:562px;width:1596px;height:1px;background:#d1d1d1"></div>
<span class="t" style="left:54px;top:538.80px;font-size:15px;letter-spacing:-0.472px;">Run:</span>
<div style="left:91px;top:560px;width:289px;height:3px;background:#4083c9"></div>
<svg style="left:103px;top:542px;" width="18" height="14" viewBox="0 0 18 14"><g opacity=".5"><path d="M1.400 9.500c-.6-2 .3-3.600 1.700-4.100C3.400 3.600 4.800 2.600 6 2.700 6.800 1.800 8 1.400 9.200 2v8.200c0 .5-.3.800-.8.800H3.200c-.9 0-1.500-.6-1.800-1.500z" fill="#4f7ff5"/><path d="M12 3.800h1.600M10.800 5.900h1.300M13.300 5.800h2.200M10.800 8h1.300M12.800 7.900h1.200M10.800 10h1.300M14 9.800h2.500" stroke="#f7a035" stroke-width="1.400" fill="none"/></g></svg>
<span class="t" style="left:123px;top:538.80px;font-size:15px;letter-spacing:0.312px;">resnet50_imagenet_classification</span>
<svg style="left:361px;top:545px;" width="8" height="8" viewBox="0 0 8 8"><path d="M1 1l6 6M7 1L1 7" stroke="#a8a8a8" stroke-width="1.100" fill="none"/></svg>
<svg style="left:1598px;top:541.5px;" width="14" height="14" viewBox="0 0 14 14"><g fill="#6e6e6e"><rect x="5.2" y="0.5" width="3.6" height="13" rx=".7" transform="rotate(0 7 7)"/><rect x="5.2" y="0.5" width="3.6" height="13" rx=".7" transform="rotate(60 7 7)"/><rect x="5.2" y="0.5" width="3.6" height="13" rx=".7" transform="rotate(120 7 7)"/><circle cx="7" cy="7" r="4.9"/></g><circle cx="7" cy="7" r="2.200" fill="#e4e8f0"/></svg>
<div style="left:1625px;top:547.8px;width:12px;height:2px;background:#6e6e6e"></div>
<div style="left:76px;top:563px;width:1px;height:608px;background:#d1d1d1"></div>
<div style="left:105px;top:563px;width:1px;height:608px;background:#d1d1d1"></div>
<svg style="left:57px;top:570px;" width="12" height="14" viewBox="0 0 12 14"><path d="M1 1.200L11 7 1 12.800z" fill="#59a869"/></svg>
<div style="left:52px;top:593px;width:20px;height:1px;background:#d1d1d1"></div>
<div style="left:57px;top:604.5px;width:10px;height:10px;background:#c2c2c2"></div>
<div style="left:52px;top:626px;width:20px;height:1px;background:#d1d1d1"></div>
<svg style="left:55px;top:637px;" width="14" height="13" viewBox="0 0 14 13"><g fill="#6e6e6e"><rect x="0.500" y="1" width="7" height="4.500"/><rect x="8.500" y="1" width="5" height="4.500"/><rect x="0.500" y="6.500" width="13" height="4.500"/></g></svg>
<div style="left:52px;top:659px;width:20px;height:1px;background:#d1d1d1"></div>
<svg style="left:55px;top:669px;" width="14" height="14" viewBox="0 0 14 14"><path d="M8.200 0.800l5 5-1.300.3-2.600 2.600.2 3-1.200 1.200-3-3-4.200 4.200-.7-.7 4.200-4.200-3-3 1.200-1.200 3 .2 2.600-2.600z" fill="#6e6e6e"/></svg>
<svg style="left:84px;top:571px;" width="14" height="14" viewBox="0 0 14 14"><path d="M7 13V2M2.300 6.500L7 1.800l4.700 4.700" stroke="#b8b8b8" stroke-width="1.500" fill="none"/></svg>
<svg style="left:84px;top:597px;" width="14" height="14" viewBox="0 0 14 14"><path d="M7 1v11M2.300 7.500L7 12.200l4.700-4.700" stroke="#b8b8b8" stroke-width="1.500" fill="none"/></svg>
<svg style="left:83px;top:623px;" width="16" height="14" viewBox="0 0 16 14"><path d="M1 2h14M1 7h10.500a2.400 2.400 0 0 1 0 4.800H7" stroke="#6e6e6e" stroke-width="1.400" fill="none"/><path d="M9.500 9.300L7 11.800l2.500 2.500M1 11.800h3.500" stroke="#6e6e6e" stroke-width="1.400" fill="none"/></svg>
<div style="left:80px;top:645px;width:22px;height:22px;background:#cfcfcf;border-radius:3px"></div>
<svg style="left:84px;top:648px;" width="15" height="15" viewBox="0 0 15 15"><path d="M1.500 5h4M1.500 9h4M1.500 13.500h12" stroke="#4d4d4d" stroke-width="1.600" fill="none"/><path d="M10.500 2.500v7.500M7.500 7l3 3 3-3" stroke="#4d4d4d" stroke-width="1.600" fill="none"/></svg>
<svg style="left:84px;top:675px;" width="15" height="14" viewBox="0 0 15 14"><g fill="#6e6e6e"><rect x="3.500" y="0.500" width="8" height="2.600"/><path d="M0.500 4.300h14v6.200h-2.300V8.200H2.800v2.300H0.500z"/><rect x="4" y="9.500" width="7" height="4"/></g></svg>
<svg style="left:85px;top:701px;" width="13" height="15" viewBox="0 0 13 15"><g fill="#6e6e6e"><path d="M4.500 0.500h4v1.500h3.500v2H1v-2h3.500z"/><path d="M2 5h9v9.500H2z"/></g></svg>
<div style="left:106px;top:563px;width:1538px;height:608px;background:#fff"></div>
<span class="m" style="left:116.2px;top:562.57px;font-size:11.63px;color:#00007f;">2022-04-09 22:23:04 - [INFO] resnet50_imagenet_classification start running...</span>
<span class="m" style="left:116.2px;top:580.57px;font-size:11.63px;color:#00007f;">2022-04-09 22:23:04 - [INFO] Synchronizing local project to remote... (HwHiAiUser@192.168.199.204:/home/HwHiAiUser/MindStudio-WorkSpace/resnet50_imagenet_classification_e335eafd)</span>
<span class="m" style="left:116.2px;top:598.57px;font-size:11.63px;color:#00007f;">2022-04-09 22:23:10 - [INFO] Done.</span>
<span class="m" style="left:116.2px;top:616.57px;font-size:11.63px;color:#00007f;">2022-04-09 22:23:10 - [INFO] Execute command on remote:</span>
<span class="m" style="left:116.2px;top:634.57px;font-size:11.63px;color:#00007f;">cd /home/HwHiAiUser/MindStudio-WorkSpace/resnet50_imagenet_classification_e335eafd/out &amp;&amp; ./main</span>
<span class="m" style="left:116.2px;top:670.57px;font-size:11.63px;color:#00007f;">[INFO]  acl init success</span>
<span class="m" style="left:116.2px;top:688.57px;font-size:11.63px;color:#00007f;">[INFO]  set device 0 success</span>
<span class="m" style="left:116.2px;top:706.57px;font-size:11.63px;color:#00007f;">[INFO]  create context success</span>
<span class="m" style="left:116.2px;top:724.57px;font-size:11.63px;color:#00007f;">[INFO]  create stream success</span>
<span class="m" style="left:116.2px;top:742.57px;font-size:11.63px;color:#00007f;">[INFO]  get run mode success</span>
<span class="m" style="left:116.2px;top:760.57px;font-size:11.63px;color:#00007f;">[INFO]  load model ../model/resnet50.om success</span>
<span class="m" style="left:116.2px;top:778.57px;font-size:11.63px;color:#00007f;">[INFO]  create model description success</span>
<span class="m" style="left:116.2px;top:796.57px;font-size:11.63px;color:#00007f;">[INFO]  create model input success</span>
<span class="m" style="left:116.2px;top:814.57px;font-size:11.63px;color:#00007f;">[INFO]  create model output success</span>
<span class="m" style="left:116.2px;top:832.57px;font-size:11.63px;color:#00007f;">[INFO]  start to process file:../data/dog1_1024_683.bin</span>
<span class="m" style="left:116.2px;top:850.57px;font-size:11.63px;color:#00007f;">[INFO]  model execute success</span>
<span class="m" style="left:116.2px;top:868.57px;font-size:11.63px;color:#00007f;">[INFO]  top 1: index[161] value[0.763672]</span>
<span class="m" style="left:116.2px;top:886.57px;font-size:11.63px;color:#00007f;">[INFO]  top 2: index[162] value[0.157593]</span>
<span class="m" style="left:116.2px;top:904.57px;font-size:11.63px;color:#00007f;">[INFO]  top 3: index[167] value[0.039215]</span>
<span class="m" style="left:116.2px;top:922.57px;font-size:11.63px;color:#00007f;">[INFO]  top 4: index[163] value[0.021835]</span>
<span class="m" style="left:116.2px;top:940.57px;font-size:11.63px;color:#00007f;">[INFO]  top 5: index[166] value[0.011871]</span>
<span class="m" style="left:116.2px;top:958.57px;font-size:11.63px;color:#00007f;">[INFO]  output data success</span>
<span class="m" style="left:116.2px;top:976.57px;font-size:11.63px;color:#00007f;">[INFO]  start to process file:../data/dog2_1024_683.bin</span>
<span class="m" style="left:116.2px;top:994.57px;font-size:11.63px;color:#00007f;">[INFO]  model execute success</span>
<span class="m" style="left:116.2px;top:1012.57px;font-size:11.63px;color:#00007f;">[INFO]  top 1: index[267] value[0.935547]</span>
<span class="m" style="left:116.2px;top:1030.57px;font-size:11.63px;color:#00007f;">[INFO]  top 2: index[266] value[0.041107]</span>
<span class="m" style="left:116.2px;top:1048.57px;font-size:11.63px;color:#00007f;">[INFO]  top 3: index[265] value[0.018967]</span>
<span class="m" style="left:116.2px;top:1066.57px;font-size:11.63px;color:#00007f;">[INFO]  top 4: index[219] value[0.002865]</span>
<span class="m" style="left:116.2px;top:1084.57px;font-size:11.63px;color:#00007f;">[INFO]  top 5: index[160] value[0.000311]</span>
<span class="m" style="left:116.2px;top:1102.57px;font-size:11.63px;color:#00007f;">[INFO]  output data success</span>
<span class="m" style="left:116.2px;top:1120.57px;font-size:11.63px;color:#00007f;">[INFO]  destroy model input success</span>
<span class="m" style="left:116.2px;top:1138.57px;font-size:11.63px;color:#00007f;">[INFO]  destroy model output success</span>
<div style="left:106px;top:1156.57px;width:700px;height:14.43px;overflow:hidden"><span class="m" style="left:10.2px;top:0;color:#00007f">[INFO]  unload model success, modelId is 1</span></div>
<div style="left:1634px;top:563px;width:10px;height:467px;background:#e6e6e6"></div>
<div style="left:1220px;top:1097px;width:418px;height:66px;background:#f2f2f2;border:1px solid #d0d0d0;box-shadow:0 2px 6px rgba(0,0,0,.12)"></div>
<svg style="left:1230px;top:1109px;" width="15" height="15" viewBox="0 0 15 15"><circle cx="7.500" cy="7.500" r="7" fill="#3592c4"/><rect x="6.500" y="6.300" width="2" height="5.200" fill="#fff"/><circle cx="7.500" cy="4.200" r="1.200" fill="#fff"/></svg>
<span class="t" style="left:1252px;top:1107.80px;font-size:15px;letter-spacing:0.169px;">Externally added files can be added to Git</span>
<span class="t" style="left:1252px;top:1130.30px;font-size:15px;color:#4a7fc0;letter-spacing:0.021px;">View Files</span>
<span class="t" style="left:1336px;top:1130.30px;font-size:15px;color:#4a7fc0;letter-spacing:0.125px;">Always Add</span>
<span class="t" style="left:1429.5px;top:1130.30px;font-size:15px;color:#4a7fc0;letter-spacing:0.213px;">Don't Ask Again</span>
<div style="left:26px;top:1171px;width:1618px;height:1px;background:#d1d1d1"></div>
<div style="left:241px;top:1172px;width:57px;height:21px;background:#c6c6c6"></div>
<span class="t" style="left:75.5px;top:1173.90px;font-size:13px;letter-spacing:0.796px;">Output</span>
<span class="t" style="left:156.5px;top:1173.90px;font-size:13px;letter-spacing:0.229px;">Git</span>
<span class="t" style="left:208.5px;top:1173.90px;font-size:13px;letter-spacing:0.703px;">Log</span>
<span class="t" style="left:268px;top:1173.90px;font-size:13px;letter-spacing:-0.354px;">Run</span>
<span class="t" style="left:326px;top:1173.90px;font-size:13px;letter-spacing:-0.382px;">TODO</span>
<span class="t" style="left:400px;top:1173.90px;font-size:13px;letter-spacing:0.422px;">Problems</span>
<span class="t" style="left:495.5px;top:1173.90px;font-size:13px;letter-spacing:0.520px;">Terminal</span>
<span class="t" style="left:588.5px;top:1173.90px;font-size:13px;letter-spacing:0.274px;">Python Packages</span>
<span class="t" style="left:739.5px;top:1173.90px;font-size:13px;letter-spacing:0.311px;">File Transfer</span>
<span class="t" style="left:860px;top:1173.90px;font-size:13px;letter-spacing:0.485px;">Remote Terminal</span>
<span class="t" style="left:1007px;top:1173.90px;font-size:13px;letter-spacing:0.377px;">Build</span>
<span class="t" style="left:1550px;top:1173.90px;font-size:13px;letter-spacing:0.305px;">Event Log</span>
<svg style="left:58px;top:1176px;" width="14" height="14" viewBox="0 0 14 14"><path d="M0.800 7.500V13h12.400V7.500" stroke="#5a5a5a" stroke-width="1.100" fill="none"/><path d="M7 10V1.500M3.800 4.500L7 1.300l3.200 3.200" stroke="#5a5a5a" stroke-width="1.100" fill="none"/></svg>
<svg style="left:140px;top:1178px;" width="11" height="12" viewBox="0 0 11 12"><path d="M1.700 0.500v11" stroke="#5a5a5a" stroke-width="2.200"/><path d="M1.700 7.500H6.800V3.500" stroke="#5a5a5a" stroke-width="1.800" fill="none"/><path d="M3.600 4.300L6.800 0.300l3.200 4z" fill="#5a5a5a"/></svg>
<svg style="left:192px;top:1177px;" width="13" height="13" viewBox="0 0 13 13"><rect x="0.500" y="0.500" width="12" height="12" stroke="#5a5a5a" stroke-width="1" fill="none"/><path d="M6.500 3v7M3 6.500h7" stroke="#5a5a5a" stroke-width="1.100"/></svg>
<svg style="left:253px;top:1178px;" width="9" height="11" viewBox="0 0 9 11"><path d="M0.500 0.500l8 5-8 5z" fill="#5a5a5a"/></svg>
<svg style="left:310.5px;top:1179px;" width="11" height="10" viewBox="0 0 11 10"><path d="M3 1.200H10.500M3 4.700H10.500M3 8.200H10.500" stroke="#5a5a5a" stroke-width="1.500"/><path d="M0 1.200h1.800M0 4.700h1.800M0 8.200h1.800" stroke="#5a5a5a" stroke-width="1.500"/></svg>
<svg style="left:384px;top:1177px;" width="12" height="12" viewBox="0 0 12 12"><circle cx="6" cy="6" r="5.500" fill="#5a5a5a"/><rect x="5.200" y="2.600" width="1.600" height="4.400" fill="#f2f2f2"/><rect x="5.200" y="8" width="1.600" height="1.600" fill="#f2f2f2"/></svg>
<svg style="left:480px;top:1178px;" width="12" height="11" viewBox="0 0 12 11"><rect x="0" y="0" width="12" height="11" fill="#5a5a5a"/><path d="M2.500 3l3 2.500-3 2.500" stroke="#f2f2f2" stroke-width="1.200" fill="none"/><path d="M6.500 8.500h3" stroke="#f2f2f2" stroke-width="1.200"/></svg>
<svg style="left:572px;top:1177px;" width="13" height="13" viewBox="0 0 13 13"><path d="M6.500 0.800l5.700 2.700-5.700 2.700L0.800 3.500z" fill="#5a5a5a"/><path d="M0.800 6.500l5.700 2.700 5.700-2.700M0.800 9.500l5.700 2.700 5.700-2.700" stroke="#5a5a5a" stroke-width="1.100" fill="none"/></svg>
<svg style="left:721px;top:1176px;" width="14" height="15" viewBox="0 0 14 15"><rect x="1" y="2" width="12" height="12" stroke="#5a5a5a" stroke-width="1.100" fill="none"/><path d="M4 0.500v3M10 0.500v3" stroke="#5a5a5a" stroke-width="1.200"/><path d="M5 6l3.500 2.500L5 11z" fill="#2a7fe8"/><path d="M2.500 8.500h1.500" stroke="#2a7fe8" stroke-width="1.200"/></svg>
<svg style="left:839px;top:1175px;" width="17" height="17" viewBox="0 0 17 17"><rect x="1" y="1" width="14" height="13" stroke="#5a5a5a" stroke-width="1.200" fill="none"/><path d="M4 16h8" stroke="#5a5a5a" stroke-width="1.200"/><path d="M5 4v5h1.800l2.200 3 1.200-.8-1.900-2.700 2.700-.5z" fill="#2a7fe8"/></svg>
<svg style="left:988px;top:1177px;" width="13" height="13" viewBox="0 0 13 13"><path d="M1 3.800L5.500 1l1.700 2.200-1.500 1 6.300 6.500-1.400 1.300-6.300-6.800-1.800 1.100z" fill="#5a5a5a"/></svg>
<svg style="left:1532px;top:1177px;" width="14" height="14" viewBox="0 0 14 14"><circle cx="7" cy="7" r="6.800" fill="#59a869"/></svg>
<span class="t" style="left:1536.2px;top:1174.3px;font-size:9px;font-weight:bold;color:#fff">2</span>
<div style="left:26px;top:1193px;width:1618px;height:1px;background:#d1d1d1"></div>
<svg style="left:32px;top:1197px;" width="13" height="13" viewBox="0 0 13 13"><rect x="2.500" y="0.500" width="10" height="10" stroke="#5a5a5a" stroke-width="1" fill="none"/><path d="M0.500 3v9.500H10" stroke="#5a5a5a" stroke-width="1" fill="none"/></svg>
<span class="t" style="left:53px;top:1193.80px;font-size:15px;letter-spacing:0.151px;">Externally added files can be added to Git // View Files // Always Add // Don't Ask Again (42 minutes ago)</span>
<div style="left:1310.5px;top:1197.5px;width:13px;height:13px;background:#e0001a;border-radius:50%"></div>
<span class="t" style="left:1336px;top:1193.80px;font-size:15px;letter-spacing:-0.599px;">44:1</span>
<span class="t" style="left:1374.5px;top:1193.80px;font-size:15px;letter-spacing:-0.604px;">LF</span>
<span class="t" style="left:1403px;top:1193.80px;font-size:15px;letter-spacing:-0.142px;">UTF-8</span>
<span class="t" style="left:1456.5px;top:1193.80px;font-size:15px;letter-spacing:-0.218px;">4 spaces</span>
<svg style="left:1527px;top:1197px;" width="14" height="13" viewBox="0 0 14 13"><path d="M7 0.500l6.700 12H0.300z" fill="#f4af3d"/><rect x="6.200" y="4.500" width="1.600" height="4.300" fill="#fff"/><rect x="6.200" y="9.800" width="1.600" height="1.600" fill="#fff"/></svg>
<span class="t" style="left:1544.5px;top:1193.80px;font-size:15px;letter-spacing:-0.244px;">1a8e9580</span>
<svg style="left:1618px;top:1197px;" width="13" height="13" viewBox="0 0 13 13"><rect x="3.500" y="6" width="9" height="6.500" fill="#6e6e6e"/><path d="M1.500 6V3.500a2.500 2.500 0 0 1 5 0V6" stroke="#6e6e6e" stroke-width="1.400" fill="none"/></svg>
</div></body></html>
